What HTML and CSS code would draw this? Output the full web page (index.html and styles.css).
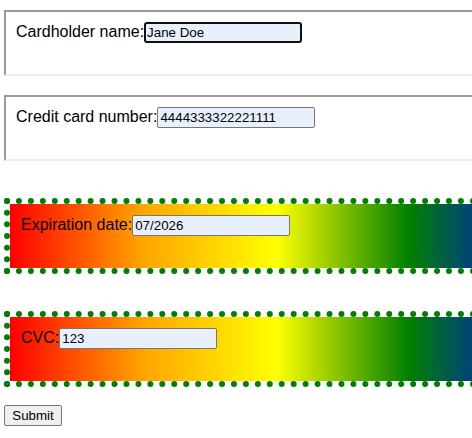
FILE: index.html
```html
<!DOCTYPE html>
<html>
<head>
<meta charset="utf-8">
<link rel="stylesheet" href="styles.css">
</head>
<body>
<form class="form">
  <div class="box plain"><label class="lbl" for="name">Cardholder name:</label><input id="name" class="field focused" type="text" value="Jane Doe"></div>
  <div class="box plain second"><label class="lbl" for="cc">Credit card number:</label><input id="cc" class="field" type="text" value="4444333322221111"></div>
  <div class="box fancy"><label class="lbl" for="exp">Expiration date:</label><input id="exp" class="field" type="text" value="07/2026"></div>
  <div class="box fancy"><label class="lbl" for="cvc">CVC:</label><input id="cvc" class="field" type="text" value="123"></div>
  <button class="submit" type="button">Submit</button>
</form>
</body>
</html>
```
FILE: styles.css
```css
html, body {
  overflow-x: hidden;
}
body {
  margin: 0;
  padding: 10px 0 0 4px;
  font-family: "Liberation Sans", Arial, sans-serif;
  font-size: 16px;
  color: #000;
  background: #fff;
}
.form {
  display: flex;
  flex-direction: column;
  align-items: flex-start;
}
.box {
  box-sizing: border-box;
  width: 544px;
  flex: none;
}
.plain {
  height: 66px;
  border: 2px solid;
  border-color: #9a9a9a #eeeeee #eeeeee #9a9a9a;
  padding: 10px;
}
.second {
  margin-top: 19px;
}
.fancy {
  height: 76px;
  margin-top: 37px;
  border: 6px dotted #008000;
  padding: 11px;
  background: linear-gradient(to right, #ff0000, #ffa500, #ffff00, #008000, #0000ff);
  background-clip: padding-box;
  background-origin: padding-box;
}
.field {
  box-sizing: border-box;
  width: 158px;
  height: 21px;
  margin: 0;
  padding: 1px 2px;
  border: 1px solid #767676;
  border-radius: 2px;
  background: #e8f0fe;
  font-family: "Liberation Sans", Arial, sans-serif;
  font-size: 13.333px;
  color: #000;
  outline: none;
}
.focused {
  border: 2px solid #101010;
  border-radius: 3px;
  padding: 0 1px;
}
.submit {
  box-sizing: border-box;
  width: 58px;
  margin: 18px 0 0;
  padding: 1px 6px;
  height: 21px;
  border: 1px solid #767676;
  border-radius: 2px;
  background: #efefef;
  font-family: "Liberation Sans", Arial, sans-serif;
  font-size: 13.333px;
  color: #000;
}
```
